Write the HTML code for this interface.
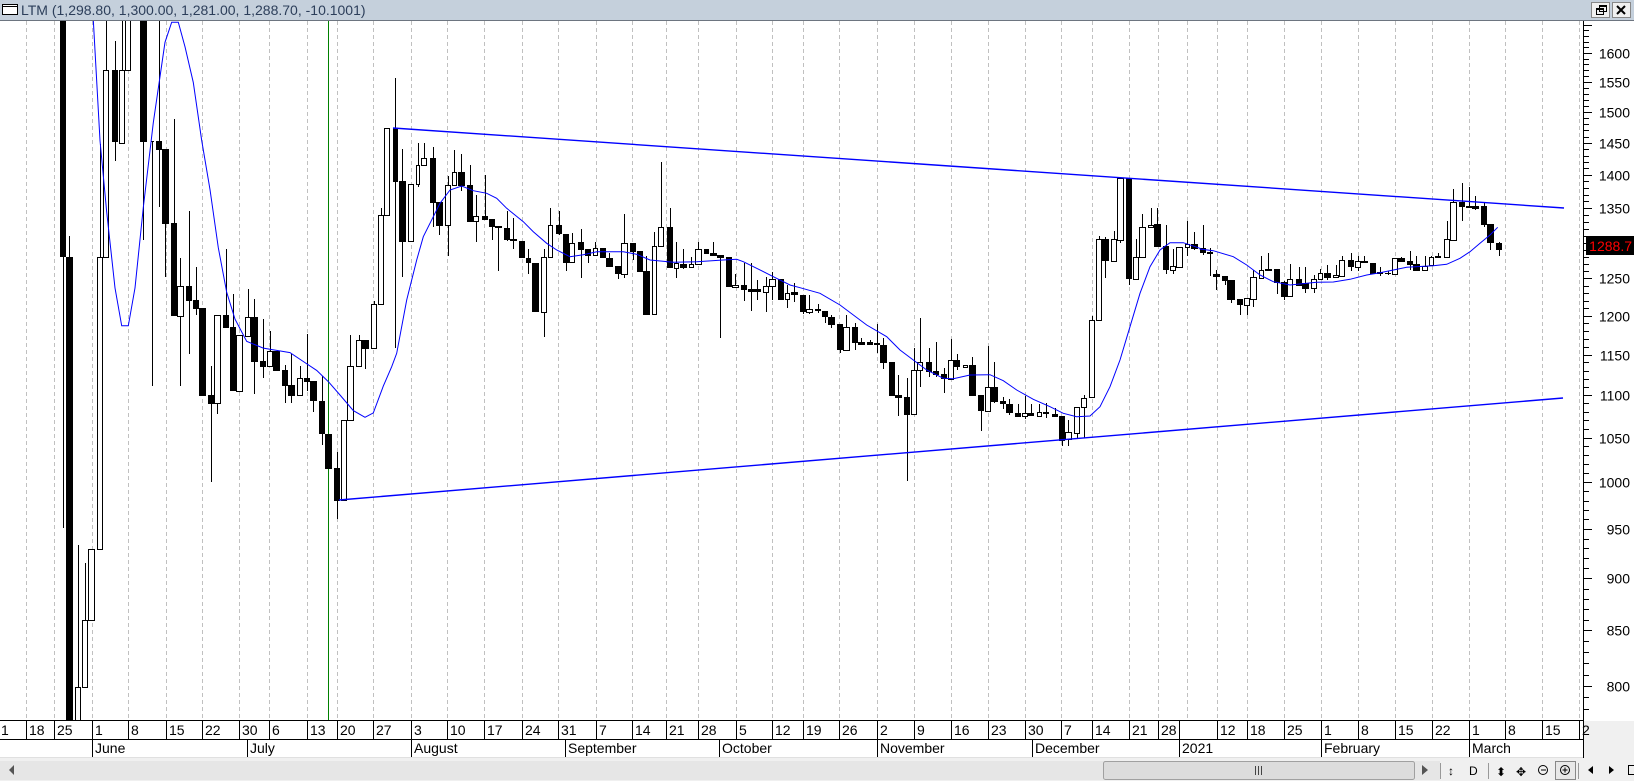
<!DOCTYPE html>
<html><head><meta charset="utf-8">
<style>
html,body{margin:0;padding:0;background:#fff;overflow:hidden}
svg{display:block;font-family:"Liberation Sans",sans-serif}
</style></head><body>
<svg id="s" width="1634" height="781" xmlns="http://www.w3.org/2000/svg"></svg>
<script>
var S=document.getElementById('s');var h='';
function R(x,y,w,ht,f,st){h+='<rect x="'+x+'" y="'+y+'" width="'+w+'" height="'+ht+'" fill="'+f+'"'+(st?' stroke="'+st+'"':'')+'/>';}
function L(x1,y1,x2,y2,c,w,extra){h+='<line x1="'+x1+'" y1="'+y1+'" x2="'+x2+'" y2="'+y2+'" stroke="'+c+'" stroke-width="'+(w||1)+'" '+(extra||'')+'/>';}
function T(x,y,t,sz,c,anc){h+='<text x="'+x+'" y="'+y+'" font-size="'+sz+'" fill="'+(c||'#000')+'"'+(anc?' text-anchor="'+anc+'"':'')+'>'+t+'</text>';}
R(0,0,1634,781,'#fff');
R(0,0,1634,20,'#c5d0dc');L(0,20.5,1634,20.5,'#6d7580',1);
h+='<rect x="2.5" y="4.5" width="15" height="10" fill="#fff" stroke="#000"/>';L(3,6.5,17,6.5,'#000',1);
T(21,15,'LTM (1,298.80, 1,300.00, 1,281.00, 1,288.70, -10.1001)',14,'#2c3e5a');
h+='<rect x="1591.5" y="2.5" width="18" height="15" fill="#f0f0f0" stroke="#888"/><rect x="1612.5" y="2.5" width="18" height="15" fill="#f0f0f0" stroke="#888"/>';
h+='<rect x="1596.5" y="8.5" width="7" height="6" fill="none" stroke="#000"/><rect x="1599.5" y="5.5" width="7" height="6" fill="none" stroke="#000"/><line x1="1596" y1="9.5" x2="1604" y2="9.5" stroke="#000"/><line x1="1599" y1="6.5" x2="1607" y2="6.5" stroke="#000"/>';
h+='<path d="M1617 6 L1625 14 M1625 6 L1617 14" stroke="#000" stroke-width="2"/>';
var ticks=[26,54,92,128,166,202,239,269,307,337,373,411,447,484,522,558,596,632,666,698,736,772,803,839,877,914,951,988,1025,1061,1092,1129,1158,1217,1247,1284,1321,1358,1395,1432,1469,1505,1542,1579];
var lab=['18','25','1','8','15','22','30','6','13','20','27','3','10','17','24','31','7','14','21','28','5','12','19','26','2','9','16','23','30','7','14','21','28','12','18','25','1','8','15','22','1','8','15','2'];
h+='<g stroke="#c0c0c0" stroke-dasharray="4,3">';
ticks.forEach(function(x){L(x+.5,21,x+.5,720,'#c0c0c0',1);});L(1187.5,21,1187.5,720,'#c0c0c0',1);
h+='</g>';
L(328.5,21,328.5,720,'#008000',1);
h+='<g clip-path="url(#cp)"><defs><clipPath id="cp"><rect x="0" y="21" width="1583" height="699"/></clipPath></defs>';
var Z=[
 [0,20,3,2.24,[[180,195,0,528,0,1138,1],[198,215,530,1600,483,1600,1],[225,239,1493,1600,1175,1600,0],[246,260,1345,1493,1216,1493,0],[265,281,1184,1345,1184,1345,0],[291,305,530,1184,277,1184,0],[310,325,113,530,-50,530,0],[336,351,113,272,47,315,1],[357,371,113,275,-50,275,0],[376,391,-50,113,-50,113,0],[420,438,-50,272,-50,493,1],[452,459,270,272,270,820,1],[468,482,272,288,-50,420,1],[486,503,290,455,290,575,1],[513,528,455,660,222,660,1],[531,548,595,662,532,820,0],[558,573,595,627,427,748,1],[579,594,627,645,553,660,1],[597,614,645,840,645,840,1],[624,639,840,857,775,1035,1],[642,659,661,859,661,882,0],[668,684,661,688,514,688,1],[690,706,688,828,613,828,1],[709,725,706,830,706,830,0],[735,749,665,707,603,707,0],[753,771,665,763,625,838,1],[780,795,764,774,670,802,1],[802,816,741,776,697,776,0],[819,837,741,785,741,785,1],[846,860,785,818,773,857,1],[865,882,818,840,748,857,1],[891,905,803,840,775,840,0],[912,927,802,808,703,830,1],[930,948,808,852,808,878,1],[957,972,853,925,798,953,1],[975,993,927,1003,927,1003,1],[1001,1017,1003,1075,968,1117,1],[1022,1037,897,1075,897,1075,0],[1041,1058,775,897,706,897,0],[1069,1082,717,775,706,775,0],[1086,1103,717,734,717,782,1],[1113,1127,636,735,630,735,0],[1134,1148,437,636,422,636,0],[1152,1168,242,437,242,437,0]]],
 [390,120,3,3,[[8,22,25,182,-125,683,1],[28,44,183,362,88,470,1],[55,68,193,364,193,364,0],[77,88,136,193,70,200,0],[94,109,115,136,68,136,0],[121,134,115,245,80,320,1],[139,155,247,314,247,344,1],[166,179,196,316,168,407,0],[187,199,157,196,90,196,0],[204,221,157,194,102,212,1],[232,245,196,302,136,302,1],[250,265,289,304,226,365,0],[277,290,289,296,165,301,1],[298,311,297,317,297,360,1],[316,332,319,322,319,452,1],[343,356,325,356,274,362,1],[361,377,357,360,295,386,1],[387,401,364,412,364,412,1],[408,421,414,427,388,461,1],[427,443,430,572,430,572,1],[454,467,412,575,388,650,0],[473,487,316,412,264,412,0],[498,512,316,340,272,345,1],[519,533,343,425,343,452,1],[538,553,368,427,338,427,0],[565,578,367,386,326,473,1],[584,599,388,404,388,428,1],[610,622,385,406,366,406,0],[631,644,385,412,385,412,1],[649,665,414,437,400,440,1],[676,689,438,460,438,476,1],[694,710,370,463,282,473,0],[721,734,370,392,370,420,1],[741,755,393,452,393,452,1],[760,776,453,582,407,582,1],[787,799,378,582,335,582,0],[805,820,322,379,126,379,0],[831,846,322,442,264,442,1],[853,865,430,445,366,473,0],[871,887,431,440,386,448,1],[898,910,431,441,411,441,0],[916,932,388,431,367,431,0],[941,955,387,398,387,398,1],[961,977,400,404,366,404,1],[982,998,405,410,405,653,1],[1008,1022,411,499,411,499,1],[1027,1043,495,502,462,502,0],[1052,1067,495,508,430,543,1],[1073,1089,508,512,430,572,1],[1092,1109,508,512,480,540,1],[1119,1133,499,515,470,577,0],[1138,1154,476,499,456,540,0],[1163,1178,476,538,476,538,1],[1186,1198,518,537,494,563,0],[1203,1220,517,522,488,545,1],[1230,1245,525,573,525,583,1]]],
 [800,160,3,3,[[18,35,448,457,405,463,0],[45,60,448,451,432,458,1],[66,81,453,469,453,488,1],[85,102,472,491,466,503,1],[110,126,492,568,492,580,1],[130,147,501,571,466,571,0],[156,171,501,545,490,570,1],[175,192,547,551,533,556,1],[200,216,546,551,540,556,1],[222,237,549,553,492,579,1],[240,258,556,605,535,628,1],[266,282,606,704,606,704,1],[285,302,706,710,644,767,1],[311,327,711,761,655,962,1],[332,347,631,763,563,763,0],[352,367,607,631,475,680,0],[377,392,607,633,565,652,1],[398,414,633,641,547,651,1],[423,438,643,655,624,700,1],[444,458,599,657,538,657,0],[462,478,599,619,581,630,1],[488,502,616,622,616,622,0],[507,525,616,704,590,704,1],[533,549,706,751,706,812,1],[555,569,682,754,557,754,0],[573,590,682,722,607,730,1],[599,614,724,730,710,748,1],[618,636,733,757,718,766,1],[645,660,760,767,733,767,1],[666,680,760,769,707,778,0],[684,700,760,766,731,766,1],[711,724,757,769,731,769,0],[730,745,757,760,730,775,1],[756,770,762,768,745,768,1],[777,792,768,840,768,858,1],[796,812,817,838,780,858,0],[823,837,742,818,742,836,0],[842,857,713,742,705,833,0],[867,882,479,712,468,712,0],[887,903,238,479,228,479,0],[906,924,238,299,230,353,1],[933,947,238,302,212,302,0],[952,968,53,241,53,248,0],[978,994,53,354,53,375,1],[999,1013,290,356,238,356,0],[1018,1034,202,290,162,290,0],[1045,1058,194,202,145,202,0],[1062,1079,192,258,145,258,1],[1089,1104,258,327,196,342,1],[1110,1124,319,329,268,342,0],[1128,1145,260,320,260,320,0],[1155,1167,251,260,183,288,0],[1173,1191,251,263,215,270,1],[1199,1214,264,275,195,286,1],[1220,1237,275,278,265,348,1],[1238,1257,341,347,331,390,1]]],
 [1200,150,3,3,[[66,80,378,390,378,404,1],[82,101,390,446,390,458,1],[110,125,448,462,448,494,1],[131,147,443,464,443,494,0],[151,167,381,446,360,472,0],[177,190,361,383,318,383,0],[195,212,357,361,310,361,1],[221,236,357,396,357,431,1],[243,258,396,437,393,450,1],[261,277,388,439,342,439,0],[287,303,388,404,352,404,1],[307,323,400,413,352,428,1],[333,347,388,415,376,428,0],[355,367,370,388,356,389,0],[372,390,370,380,344,389,1],[399,413,375,382,345,382,0],[418,433,331,377,318,377,0],[444,459,330,347,310,362,1],[465,479,334,350,318,362,0],[484,500,333,337,318,337,1],[510,525,340,370,340,370,1],[531,546,366,370,352,377,1],[556,569,368,370,362,375,1],[576,590,325,371,325,371,0],[594,611,325,332,320,332,1],[620,635,333,341,303,360,1],[640,656,343,359,318,362,1],[665,681,347,361,318,361,0],[688,700,322,345,318,345,0],[706,721,319,322,308,322,1],[733,746,268,322,212,322,0],[751,767,157,269,118,269,0],[777,793,157,167,98,213,1],[798,812,168,171,110,171,1],[817,833,168,174,138,181,1],[843,858,168,221,155,230,1],[861,880,222,277,222,301,1],[888,903,280,298,275,318,1]]]
];
Z.forEach(function(z){var ox=z[0],oy=z[1],sx=z[2],sy=z[3];z[4].forEach(function(c){
 var x1=Math.round(ox+c[0]/sx),x2=Math.round(ox+c[1]/sx);var cx=Math.round((x1+x2)/2)+.5;
 var bt=Math.round(oy+c[2]/sy),bb=Math.round(oy+c[3]/sy),wt=Math.round(oy+c[4]/sy),wb=Math.round(oy+c[5]/sy);
 L(cx,wt,cx,wb,'#000',1);
 if(bb-bt<1){L(x1,bt+.5,x2+1,bt+.5,'#000',1);}
 else if(c[6]) R(x1,bt,x2-x1+1,bb-bt+1,'#000');
 else h+='<rect x="'+(x1+.5)+'" y="'+(bt+.5)+'" width="'+(x2-x1)+'" height="'+(bb-bt)+'" fill="#fff" stroke="#000"/>';
});});
var M=[[0,20,3,2.24,[[280,0],[300,270],[320,430],[345,600],[365,685],[385,685],[405,600],[430,420],[460,230],[495,50],[515,5],[535,5],[555,60],[580,140],[605,270],[630,380],[655,510],[680,610],[705,670],[740,720],[790,735],[830,740],[870,745],[910,765],[950,785],[985,810],[1020,840],[1060,875],[1095,890],[1120,880],[1150,820]]],
[390,120,3,3,[[5,740],[20,700],[50,540],[80,420],[100,350],[130,290],[150,250],[180,210],[215,198],[250,212],[290,220],[320,235],[350,265],[400,305],[430,335],[470,370],[500,390],[540,410],[580,404],[620,395],[700,395],[740,403],[780,420],[850,427],[920,425],[1000,420],[1040,418],[1060,425],[1100,445],[1150,470],[1200,495]]],
[800,160,3,3,[[0,383],[60,400],[120,435],[200,495],[260,530],[300,570],[340,600],[380,630],[430,655],[460,656],[510,645],[570,644],[610,662],[650,690],[700,718],[750,740],[790,760],[830,770],[870,768],[900,740],[930,680],[960,600],[990,500],[1020,400],[1050,320],[1080,270],[1110,248],[1150,248],[1200,265]]],
[1200,150,3,3,[[0,297],[40,302],[100,320],[140,345],[180,375],[220,395],[270,405],[350,397],[400,396],[450,388],[500,375],[540,368],[580,360],[620,352],[700,347],[740,343],[780,325],[810,305],[840,280],[870,255],[893,232]]]];
var pts=[];M.forEach(function(z){z[4].forEach(function(p){pts.push((z[0]+p[0]/z[2]).toFixed(1)+','+(z[1]+p[1]/z[3]).toFixed(1));});});
h+='<polyline points="'+pts.join(' ')+'" fill="none" stroke="#0000ff" stroke-width="1"/>';
L(393,128,1564,208,'#0000ff',1.4);L(339,500,1563,398,'#0000ff',1.4);
h+='</g>';
L(1583.5,21,1583.5,720,'#000',1);
function Y(p){return 53+913*Math.log(1600/p);}
for(var p=780;p<=1660;p+=10){var y=Math.round(Y(p))+.5;if(y<22||y>719)continue;var maj=(p%50==0);L(1584,y,maj?1592:1589,y,'#000',1);
 if(maj&&y>40)T(1630,y+5,p,14,'#000','end');}
R(1586,236,48,19,'#000');T(1632,251,'1288.7',14,'#ff0000','end');
R(1584,721,50,40,'#f0f0f0');
L(0,720.5,1584,720.5,'#000',1);L(0,739.5,1584,739.5,'#000',1);L(0,757.5,1584,757.5,'#e0e0e0',1);L(1583.5,720,1583.5,758,'#000',1);
T(1,735,'1',14);
ticks.forEach(function(x,i){L(x+.5,721,x+.5,739,'#000',1);T(x+3,735,lab[i],14);});
L(1179.5,721,1179.5,739,'#000',1);
var mon=[[92,'June'],[247,'July'],[411,'August'],[565,'September'],[719,'October'],[877,'November'],[1032,'December'],[1179,'2021'],[1321,'February'],[1469,'March']];
mon.forEach(function(m){L(m[0]+.5,739,m[0]+.5,757,'#000',1);T(m[0]+3,753,m[1],14);});
R(0,758,1634,23,'#f0f0f0');
R(0,761,1440,19,'#e6e6e6');
h+='<path d="M9 770 L14 765 L14 775 Z" fill="#555"/>';
h+='<rect x="1103.5" y="761.5" width="311" height="18" rx="2" fill="#dcdcdc" stroke="#a0a0a0"/>';
L(1255.5,766,1255.5,775,'#444');L(1258.5,766,1258.5,775,'#444');L(1261.5,766,1261.5,775,'#444');
h+='<path d="M1422 765 L1428 770 L1422 775 Z" fill="#555"/>';
L(1440.5,763,1440.5,779,'#999');L(1488.5,763,1488.5,779,'#999');L(1578.5,763,1578.5,779,'#999');
T(1448,775,'↕',12,'#000');T(1469,775,'D',12,'#000');T(1496,776,'⬍',12,'#000');T(1516,776,'✥',12,'#000');
h+='<circle cx="1543" cy="770" r="4.5" fill="none" stroke="#000"/><line x1="1541" y1="770" x2="1546" y2="770" stroke="#000"/>';
h+='<rect x="1555.5" y="761.5" width="20" height="18" fill="#e8e8e8" stroke="#888"/><circle cx="1565" cy="770" r="4.5" fill="none" stroke="#000"/><path d="M1562.5 770 H1567.5 M1565 767.5 V772.5" stroke="#000"/>';
h+='<path d="M1593 766 L1588 770 L1593 774 Z" fill="#000"/><path d="M1609 766 L1614 770 L1609 774 Z" fill="#000"/>';
h+='<rect x="1628.5" y="765.5" width="6" height="9" fill="none" stroke="#000"/>';
S.innerHTML=h;
</script>
</body></html>
